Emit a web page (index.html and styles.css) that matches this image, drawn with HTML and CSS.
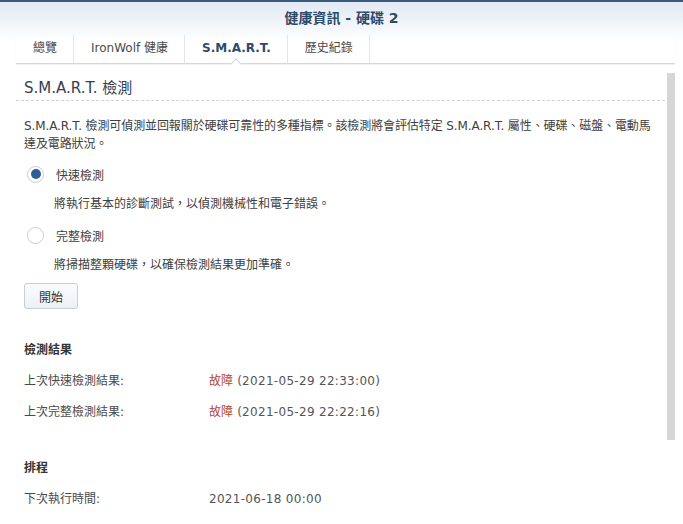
FILE: index.html
```html
<!DOCTYPE html>
<html lang="zh-Hant">
<head>
    <meta charset="UTF-8">
    <meta name="viewport" content="width=device-width, initial-scale=1.0">
    <title>健康資訊 - 硬碟 2</title>
    <link rel="stylesheet" href="styles.css">
</head>
<body>
    <div class="header">
        <div class="title">健康資訊 - 硬碟 2</div>
        <div class="tabs">
            <div class="tab">總覽</div>
            <div class="tab">IronWolf 健康</div>
            <div class="tab active">S.M.A.R.T.</div>
            <div class="tab">歷史紀錄</div>
        </div>
    </div>

    <div class="main">
        <div class="content">
            <h2 class="section-title">S.M.A.R.T. 檢測</h2>
            <p class="desc">S.M.A.R.T. 檢測可偵測並回報關於硬碟可靠性的多種指標。該檢測將會評估特定 S.M.A.R.T. 屬性、硬碟、磁盤、電動馬達及電路狀況。</p>

            <div class="option option-first">
                <span class="radio checked"></span>
                <span>快速檢測</span>
            </div>
            <p class="option-desc">將執行基本的診斷測試，以偵測機械性和電子錯誤。</p>

            <div class="option">
                <span class="radio"></span>
                <span>完整檢測</span>
            </div>
            <p class="option-desc">將掃描整顆硬碟，以確保檢測結果更加準確。</p>

            <button class="btn">開始</button>

            <h3 class="group-title">檢測結果</h3>
            <div class="row row-first">
                <span class="label">上次快速檢測結果:</span>
                <span class="value"><span class="fail">故障</span> (2021-05-29 22:33:00)</span>
            </div>
            <div class="row">
                <span class="label">上次完整檢測結果:</span>
                <span class="value"><span class="fail">故障</span> (2021-05-29 22:22:16)</span>
            </div>

            <h3 class="group-title group-gap">排程</h3>
            <div class="row row-first">
                <span class="label">下次執行時間:</span>
                <span class="value">2021-06-18 00:00</span>
            </div>
        </div>
        <div class="scrollbar"><div class="thumb"></div></div>
    </div>
</body>
</html>
```

FILE: styles.css
```css
body {
    margin: 0;
    font-family: "DejaVu Sans", "Noto Sans CJK TC", sans-serif;
    font-size: 12px;
    color: #404040;
    background: #fff;
    overflow: hidden;
}
.header {
    border-top: 2px solid #3a5a7e;
    background: linear-gradient(to bottom, #e1e9f3 0px, #fbfcfe 34px, #fff 40px);
    padding-top: 5px;
}
.title {
    text-align: center;
    font-size: 14px;
    font-weight: bold;
    line-height: 22px;
    color: #2c4a6c;
}
.tabs {
    display: flex;
    margin: 4px 8px 0 16px;
    height: 30px;
    border-bottom: 1px solid #d3d6da;
    box-shadow: 0 1px 1px rgba(0, 0, 0, 0.05);
}
.tab {
    position: relative;
    padding: 0 16px 0 17px;
    color: #4a4a4a;
    border-right: 1px solid #e4e6e8;
    margin-top: 2px;
    height: 28px;
    line-height: 26px;
}
.tab.active {
    font-weight: bold;
    color: #2c4a6c;
}
.tab.active::after {
    content: "";
    position: absolute;
    left: 50%;
    bottom: -5px;
    width: 7px;
    height: 7px;
    margin-left: -4px;
    background: #fff;
    border-left: 1px solid #d3d6da;
    border-top: 1px solid #d3d6da;
    transform: rotate(45deg);
}
.main {
    display: flex;
    margin: 0 8px 0 16px;
}
.content {
    flex: 1;
    margin-right: 2px;
}
.scrollbar {
    width: 8px;
    padding-top: 9px;
}
.thumb {
    height: 367px;
    background: #d6d6d6;
}
.section-title {
    margin: 14px 0 0;
    padding: 0 0 2px 8px;
    font-size: 15px;
    font-weight: normal;
    line-height: 20px;
    color: #34404e;
    border-bottom: 1px dashed #d0d4d8;
}
.desc {
    margin: 16px 0 0;
    padding: 0 6px 0 8px;
    line-height: 18px;
    letter-spacing: -0.1px;
}
.option {
    display: flex;
    align-items: center;
    height: 20px;
    margin: 12px 0 0 11px;
}
.option-first {
    margin-top: 11px;
}
.radio {
    width: 15px;
    height: 15px;
    border: 1px solid #c9ced4;
    border-radius: 50%;
    background: #fff;
    margin-right: 12px;
    display: flex;
    align-items: center;
    justify-content: center;
}
.radio.checked::before {
    content: "";
    width: 10px;
    height: 10px;
    border-radius: 50%;
    background: #2f5d98;
}
.option-desc {
    margin: 11px 0 0 38px;
    line-height: 18px;
}
.btn {
    display: block;
    margin: 9px 0 0 8px;
    width: 54px;
    height: 26px;
    font-family: inherit;
    font-size: 12px;
    color: #333;
    background: linear-gradient(to bottom, #fafcfd, #edf1f5);
    border: 1px solid #c6ced8;
    border-radius: 3px;
    cursor: pointer;
}
.group-title {
    margin: 32px 0 0 8px;
    font-size: 12px;
    font-weight: bold;
    line-height: 18px;
    color: #333;
}
.group-gap {
    margin-top: 38px;
}
.row {
    display: flex;
    margin: 13px 0 0 8px;
    line-height: 18px;
}
.row-first {
    margin-top: 13px;
}
.label {
    width: 185px;
    color: #4a4a4a;
}
.value {
    color: #555;
    letter-spacing: 0.3px;
}
.fail {
    color: #b2432e;
    letter-spacing: 0;
}
```
